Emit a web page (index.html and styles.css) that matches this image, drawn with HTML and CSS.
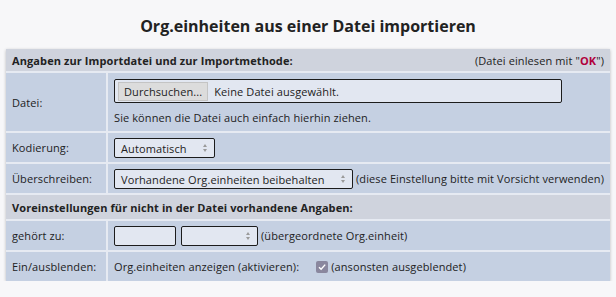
FILE: index.html
```html
<!DOCTYPE html>
<html lang="de">
<head>
    <meta charset="UTF-8">
    <title>Org.einheiten importieren</title>
    <link rel="stylesheet" href="styles.css">
</head>
<body>

    <h2 class="page-title">Org.einheiten aus einer Datei importieren</h2>

    <table class="import-table">
        <!-- Importdatei -->
        <tr class="section-row">
            <th colspan="2">
                <div class="section-head">
                    <span>Angaben zur Importdatei und zur Importmethode:</span>
                    <span class="hint">(Datei einlesen mit "<b class="ok">OK</b>")</span>
                </div>
            </th>
        </tr>
        <tr class="row-file">
            <td class="label">Datei:</td>
            <td>
                <div class="file-input">
                    <span class="file-btn">Durchsuchen...</span>
                    <span>Keine Datei ausgewählt.</span>
                </div>
                <div class="file-note">Sie können die Datei auch einfach hierhin ziehen.</div>
            </td>
        </tr>
        <tr>
            <td class="label">Kodierung:</td>
            <td>
                <div class="select select-small">Automatisch<span class="arrows"></span></div>
            </td>
        </tr>
        <tr>
            <td class="label">Überschreiben:</td>
            <td>
                <div class="inline">
                    <div class="select select-wide">Vorhandene Org.einheiten beibehalten<span class="arrows"></span></div>
                    <span>(diese Einstellung bitte mit Vorsicht verwenden)</span>
                </div>
            </td>
        </tr>

        <!-- Voreinstellungen -->
        <tr class="section-row">
            <th colspan="2">Voreinstellungen für nicht in der Datei vorhandene Angaben:</th>
        </tr>
        <tr>
            <td class="label">gehört zu:</td>
            <td>
                <div class="inline">
                    <div class="text-box"></div>
                    <div class="select select-parent"><span class="arrows"></span></div>
                    <span>(übergeordnete Org.einheit)</span>
                </div>
            </td>
        </tr>
        <tr class="row-last">
            <td class="label">Ein/ausblenden:</td>
            <td>
                <div class="inline">
                    <span>Org.einheiten anzeigen (aktivieren):</span>
                    <span class="checkbox">
                        <svg width="10" height="10" viewBox="0 0 10 10"><path d="M2 5.2 L4.1 7.3 L8.2 2.6" fill="none" stroke="#fff" stroke-width="1.4"/></svg>
                    </span>
                    <span>(ansonsten ausgeblendet)</span>
                </div>
            </td>
        </tr>
    </table>

</body>
</html>
```

FILE: styles.css
```css
:root {
    --bg-color: #f7f7f9;
    --row-color: #c5d0e2;
    --head-color: #cfd3dd;
    --line-color: #e6eaf2;
    --field-color: #e2e7f1;
    --txt-color: #222;
}

body {
    font-family: 'Open Sans', sans-serif;
    font-size: 11px;
    letter-spacing: 0.1px;
    color: var(--txt-color);
    background-color: var(--bg-color);
    margin: 0;
    padding: 0 6px;
}

.page-title {
    font-size: 16px;
    font-weight: bold;
    letter-spacing: 0;
    text-align: center;
    margin: 0;
    padding: 15px 0 12px;
    line-height: 22px;
}

.import-table {
    width: 100%;
    border-collapse: collapse;
    background-color: var(--row-color);
    box-shadow: 0 1px 3px rgba(0, 0, 0, 0.25);
    white-space: nowrap;
}

.import-table td,
.import-table th {
    border: 2px solid var(--line-color);
    padding: 0 6px;
    text-align: left;
    vertical-align: middle;
}

.import-table tr:first-child th {
    border-top: none;
}

.import-table td:first-child,
.import-table th:first-child {
    border-left: none;
}

.import-table td:last-child,
.import-table th:last-child {
    border-right: none;
}

.row-last td {
    border-bottom: none;
}

.section-row th {
    background-color: var(--head-color);
    font-weight: bold;
    height: 22px;
}

.section-row:nth-child(5) th {
    height: 24px;
}

.section-head {
    display: flex;
    justify-content: space-between;
}

.hint {
    font-weight: normal;
}

.ok {
    color: #b1003c;
}

.label {
    width: 88px;
    height: 29px;
}

.row-file td {
    height: 58px;
}

.file-input {
    display: flex;
    align-items: center;
    gap: 6px;
    width: 440px;
    height: 22px;
    padding: 0 3px;
    border: 1px solid #1c1c1c;
    border-radius: 2px;
    background-color: var(--field-color);
}

.file-btn {
    background-color: #dcdcdc;
    border: 1px solid #c4c4c4;
    padding: 1px 5px;
}

.file-note {
    margin-top: 7px;
}

.inline {
    display: flex;
    align-items: center;
    gap: 3px;
}

.select,
.text-box {
    position: relative;
    height: 20px;
    line-height: 20px;
    padding: 0 6px;
    border: 1px solid #1c1c1c;
    border-radius: 2px;
    background-color: var(--field-color);
    box-sizing: border-box;
}

.select-small {
    width: 101px;
}

.select-wide {
    width: 239px;
}

.text-box {
    width: 62px;
    margin-right: 2px;
}

.select-parent {
    width: 77px;
}

.arrows {
    position: absolute;
    right: 7px;
    top: 5px;
    width: 0;
    height: 0;
    border-left: 2px solid transparent;
    border-right: 2px solid transparent;
    border-bottom: 3px solid #9a9a9a;
}

.arrows::after {
    content: "";
    position: absolute;
    left: -2px;
    top: 5px;
    border-left: 2px solid transparent;
    border-right: 2px solid transparent;
    border-top: 3px solid #9a9a9a;
}

.checkbox {
    display: inline-flex;
    align-items: center;
    justify-content: center;
    width: 12px;
    height: 12px;
    margin-left: 14px;
    border-radius: 2px;
    background-color: #8a879e;
}
```
